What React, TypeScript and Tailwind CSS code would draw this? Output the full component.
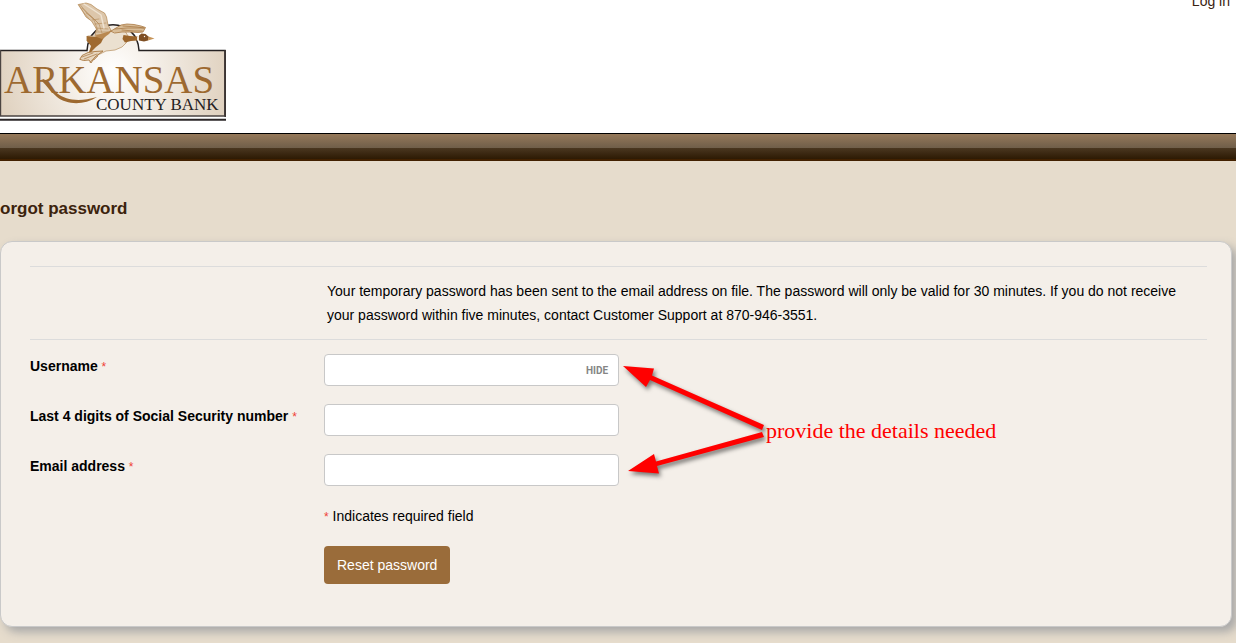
import type { ReactNode } from "react";

function BankLogo() {
  return (
    <svg
      role="img"
      aria-label="Arkansas County Bank"
      width="227"
      height="122"
      viewBox="0 0 227 122"
      className="block"
    >
      <defs>
        <radialGradient id="plate" gradientUnits="userSpaceOnUse" cx="113" cy="72" r="115">
          <stop offset="0" stopColor="#ffffff" />
          <stop offset="0.25" stopColor="#f8f4ef" />
          <stop offset="1" stopColor="#e0d2c0" />
        </radialGradient>
      </defs>
      <path d="M0.5 50.5H87C88 15.500 138 15.500 139 50.500H225V116H0.500Z" fill="url(#plate)" />
      <path d="M0 50.500H87C88.500 16 137.500 16 139 50.500H225V116" fill="none" stroke="#252122" strokeWidth="1.500" />
      <path d="M0.500 50V116H226" fill="none" stroke="#4b4441" strokeWidth="1.400" />
      <path d="M225.200 50V117" stroke="#3c3533" strokeWidth="1.600" />
      <path d="M0 119.800H226" stroke="#2b2627" strokeWidth="2" />

      <g strokeLinejoin="round" strokeLinecap="round">
        <path
          d="M78.500 4.500L86 3L91 4.500L97 9L104.500 13L106.500 17L108 25L111 30L106 35L95 35L96.500 29L94 25L91.500 21L86 17L83 12Z"
          fill="#dcc6aa"
          stroke="#b38650"
          strokeWidth="0.700"
        />
        <path
          d="M79 5L84 13L89 19M80 4.500L87 13L94 20L98 31M82 8L91 16L98 23M86 13L93 18L99 24L102 33M95 24L106 23M96 28L108 29M96 32L108 32M92 20L99 19"
          fill="none"
          stroke="#b48a58"
          strokeWidth="0.600"
        />
        <path d="M84 4L92 9L101 15L104 28" fill="none" stroke="#efe3d2" strokeWidth="1.400" />
        <path
          d="M88 36L98 36L106 35L111 31L125 31L128 36L127 42L122 47L115 50L106 51L100 54L91 56L92 46L87 41Z"
          fill="#ebe0d0"
          stroke="#b89162"
          strokeWidth="0.700"
        />
        <path d="M86.500 36L95 37L106 35.500L103 39L101 43L96 47L92 51L88 55L91 46L87 41Z" fill="#9f6a30" />
        <path d="M94 36L112 30.500L109 34L102 39Z" fill="#b98850" />
        <path
          d="M80 59L82 55.500L88 52.500L95 51.500L103 51L99 54L95 57L91 63L89 60L84 60.500Z"
          fill="#e7d6bf"
          stroke="#a97842"
          strokeWidth="0.900"
        />
        <path d="M82 57L93 53M84 59L97 54M90 62L99 54M94 60L98 56" fill="none" stroke="#a97842" strokeWidth="0.700" />
        <path
          d="M111 31L116 28L121 25L127 24L134 24.500L141 26L145.500 27.500L143 32L138 32.500L130 32L122 32L115 33Z"
          fill="#d9bd98"
          stroke="#aa7943"
          strokeWidth="0.800"
        />
        <path
          d="M115 29L127 28L144 28M123 26L137 27L144 28M122 30L134 31L142 31"
          fill="none"
          stroke="#a3733e"
          strokeWidth="0.700"
        />
        <path d="M123.500 35L130 36L138 36.500L137.500 40.500L131 41L125 42.500L122.500 39Z" fill="#9b652c" />
        <path d="M137 36.500L140 35.500L139.500 40.500L137 40.500Z" fill="#f4eadc" />
        <path d="M139 35.500L141.500 33.500L145.500 34L149 37L148 40.500L144 41.500L139 40.500Z" fill="#7f4f24" />
        <path d="M148.500 36.500L154.500 38.500L148 40.500Z" fill="#c69357" />
        <circle cx="144.500" cy="36.500" r="0.700" fill="#faf5ed" />
      </g>

      <text x="4" y="93" fontFamily="Liberation Serif, Times New Roman, serif" fontSize="39" fill="#9d6930">
        ARKANSAS
      </text>
      <path d="M44 79C54 93 66 106 97 97C84 105.500 67 105 57 97C51 92 47 86 41 80Z" fill="#9d6930" />
      <text x="96" y="110" fontFamily="Liberation Serif, Times New Roman, serif" fontSize="17" fill="#252122">
        COUNTY BANK
      </text>
    </svg>
  );
}

function Required() {
  return <span className="text-xs font-normal text-[#ef4135]">*</span>;
}

function Field({ id, label, type = "text", children }: { id: string; label: string; type?: string; children?: ReactNode }) {
  return (
    <div className="flex items-start">
      <label htmlFor={id} className="w-[294px] shrink-0 text-sm leading-6 font-bold">
        {label} <Required />
      </label>
      <div className="relative w-[295px]">
        <input
          id={id}
          type={type}
          required
          className="block h-8 w-full rounded border border-[#c8c8c8] bg-white px-2 text-sm outline-none focus:border-[#9a6c3a]"
        />
        {children}
      </div>
    </div>
  );
}

function Annotation() {
  return (
    <div className="pointer-events-none absolute top-[10px] left-[590px] flex items-center">
      <svg width="146" height="138" viewBox="620 350 146 138" aria-hidden="true" className="shrink-0 overflow-visible">
        <g fill="#ff0000" className="drop-shadow-[2px_3px_2px_rgba(0,0,0,0.5)]">
          <path d="M623 366L654 368.500L652 375.500L764 425L762 430L650 380L646 387Z" />
          <path d="M628 471L654 454L656 461.500L762 432L764 437L657 466L659 473.500Z" />
        </g>
      </svg>
      <p className="pt-6 font-['Liberation_Serif',serif] text-[22px] leading-6 whitespace-nowrap text-[#ff0000]">
        provide the details needed
      </p>
    </div>
  );
}

export default function App() {
  return (
    <div className="min-h-screen overflow-hidden bg-[#e6dccc] font-['Liberation_Sans',Arial,sans-serif] text-black">
      <header>
        <div className="flex h-[133px] items-start justify-between bg-white">
          <BankLogo />
          <a href="#login" className="-mt-1.5 mr-1.5 text-sm leading-none text-[#3a2310]">
            Log in
          </a>
        </div>
        <div className="h-[15px] border-t border-black bg-linear-to-b from-[#96795a] to-[#6f5e49]" />
        <div className="h-[13px] border-b-2 border-[#422100] bg-linear-to-b from-[#4a3720] to-[#2d1a04]" />
      </header>

      <main className="pt-9 pr-1 pb-4">
        <h1 className="text-[17px] leading-6 font-bold text-[#3c230c]">orgot password</h1>

        <section className="mt-5 rounded-xl border border-[#c9c9c9] bg-[#f4efe9] pt-6 pr-6 pb-[42px] pl-[29px] shadow-[5px_5px_10px_#a8a8a8]">
          <div className="border-y border-[#dcdcdc] py-3 pl-[297px]">
            <p className="text-sm leading-6">
              Your temporary password has been sent to the email address on file. The password will only be valid for 30
              minutes. If you do not receive your password within five minutes, contact Customer Support at
              870-946-3551.
            </p>
          </div>

          <form className="relative flex flex-col gap-[18px] pt-3.5" onSubmit={(e) => e.preventDefault()}>
            <Field id="username" label="Username">
              <button
                type="button"
                className="absolute inset-y-0 right-[11px] font-['Roboto',sans-serif] text-[10px] font-bold text-[#858585]"
              >
                HIDE
              </button>
            </Field>
            <Field id="ssn" label="Last 4 digits of Social Security number" />
            <Field id="email" label="Email address" type="email" />
            <p className="pl-[294px] text-sm leading-6">
              <Required /> Indicates required field
            </p>
            <div className="pl-[294px]">
              <button type="submit" className="h-[38px] rounded bg-[#9a6c3a] px-[13px] text-sm text-white">
                Reset password
              </button>
            </div>
            <Annotation />
          </form>
        </section>
      </main>
    </div>
  );
}
